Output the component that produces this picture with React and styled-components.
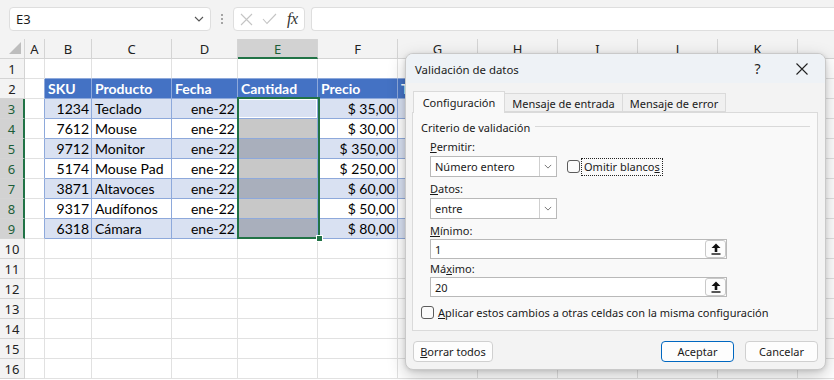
import React from 'react';
import styled, { createGlobalStyle } from 'styled-components';

const GlobalStyle = createGlobalStyle`
  html, body { margin: 0; padding: 0; background: #ffffff; }
  body { width: 834px; height: 380px; overflow: hidden; font-family: "Noto Sans", sans-serif; }
  * { box-sizing: border-box; }
`;

const Page = styled.div`
  position: relative;
  width: 834px;
  height: 380px;
  overflow: hidden;
  background: #ffffff;
`;

/* ---------- formula bar ---------- */
const TopBar = styled.div`
  display: flex;
  align-items: flex-start;
  height: 39px;
  padding: 7px 0 0 9px;
  background: #f3f3f3;
`;

const NameBox = styled.div`
  display: flex;
  align-items: center;
  justify-content: space-between;
  width: 202px;
  height: 24px;
  padding: 0 6px 0 6px;
  background: #ffffff;
  border: 1px solid #dedede;
  border-radius: 4px;
  font: 13px "Noto Sans", sans-serif;
  color: #1b1b1b;
`;

const Grip = styled.div`
  display: flex;
  flex-direction: column;
  align-items: center;
  justify-content: center;
  gap: 2px;
  width: 22px;
  height: 24px;
  span { width: 2px; height: 2px; background: #8a8a8a; border-radius: 1px; }
`;

const FxBox = styled.div`
  display: flex;
  align-items: center;
  gap: 9px;
  width: 72px;
  height: 24px;
  padding: 0 0 0 6px;
  background: #ffffff;
  border: 1px solid #dedede;
  border-radius: 4px;
`;

const FxText = styled.span`
  font: italic 16px "Liberation Serif", serif;
  color: #333;
  letter-spacing: -0.5px;
  margin-left: 1px;
`;

const FormulaInput = styled.div`
  flex: 1;
  height: 24px;
  margin-left: 6px;
  background: #ffffff;
  border: 1px solid #dedede;
  border-right: none;
  border-radius: 4px 0 0 4px;
`;

/* ---------- sheet ---------- */
const SheetWrap = styled.div`
  position: relative;
`;

const SheetGrid = styled.div`
  display: grid;
  grid-template-columns: 25px 20px 47px 80px 66px 80px 80px 80px 80px 80px 80px 80px 80px;
  grid-auto-rows: 20px;
`;

const ColHead = styled.div`
  display: flex;
  align-items: center;
  justify-content: center;
  background: ${p => (p.$sel ? '#d2d2d2' : '#f3f3f3')};
  border-right: 1px solid #d4d4d4;
  border-bottom: ${p => (p.$sel ? '2px solid #217346' : '1px solid #d4d4d4')};
  font: 13px "Noto Sans", sans-serif;
  color: ${p => (p.$sel ? '#1b5e38' : '#222')};
  padding-top: ${p => (p.$sel ? '1px' : '0')};
`;

const Corner = styled.div`
  position: relative;
  background: #f3f3f3;
  border-right: 1px solid #d4d4d4;
  border-bottom: 1px solid #d4d4d4;
  svg { position: absolute; right: 3px; bottom: 4px; }
`;

const RowHead = styled.div`
  display: flex;
  align-items: center;
  justify-content: center;
  background: ${p => (p.$sel ? '#d2d2d2' : '#f3f3f3')};
  border-right: ${p => (p.$sel ? '2px solid #217346' : '1px solid #d4d4d4')};
  border-bottom: 1px solid #d4d4d4;
  font: 13px "Noto Sans", sans-serif;
  color: ${p => (p.$sel ? '#1b5e38' : '#222')};
`;

const Cell = styled.div`
  display: flex;
  align-items: center;
  justify-content: ${p => (p.$align === 'right' ? 'flex-end' : 'flex-start')};
  padding: 0 2px 0 3px;
  background: ${p => p.$bg};
  border-right: 1px solid ${p => p.$br};
  border-bottom: 1px solid ${p => p.$bb};
  box-shadow: ${p => (p.$active ? 'inset 0 0 0 1px #ffffff' : 'none')};
  font: ${p => (p.$bold ? 'bold' : 'normal')} 14px Lato, "Liberation Sans", sans-serif;
  color: ${p => (p.$bold ? '#ffffff' : '#000000')};
  white-space: nowrap;
  overflow: hidden;
`;

const Selection = styled.div`
  position: absolute;
  left: 237px;
  top: 58px;
  width: 83px;
  height: 142px;
  border: 2px solid #217346;
  pointer-events: none;
`;

const Handle = styled.div`
  position: absolute;
  right: -5px;
  bottom: -5px;
  width: 7px;
  height: 7px;
  background: #217346;
  border: 1px solid #ffffff;
`;

/* ---------- dialog ---------- */
const Dialog = styled.div`
  position: absolute;
  left: 405px;
  top: 53px;
  width: 421px;
  height: 317px;
  display: flex;
  flex-direction: column;
  background: #f3f3f3;
  border: 1px solid #c9c9c9;
  border-radius: 8px;
  overflow: hidden;
  box-shadow: 0 6px 18px rgba(0, 0, 0, 0.22), 0 1px 4px rgba(0, 0, 0, 0.12);
  font: 11px "Noto Sans", sans-serif;
  color: #1a1a1a;
`;

const TitleBar = styled.div`
  display: flex;
  align-items: center;
  height: 29px;
  padding: 0 0 0 9px;
  background: #eef2f6;
  font-size: 11.4px;
`;

const Title = styled.div`
  flex: 1;
  padding-top: 1px;
`;

const TitleBtn = styled.div`
  display: flex;
  align-items: center;
  justify-content: center;
  width: 46px;
  height: 29px;
  font-size: 14px;
  color: #222;
  padding-left: ${p => p.$pl || 0}px;
`;

const DialogBody = styled.div`
  display: flex;
  flex-direction: column;
  padding: 8px 7px 8px 6px;
`;

const TabStrip = styled.div`
  display: flex;
  align-items: flex-end;
  height: 21px;
  padding-left: 1px;
  position: relative;
  z-index: 1;
`;

const Tab = styled.div`
  display: flex;
  align-items: center;
  justify-content: center;
  width: ${p => p.$w}px;
  height: ${p => (p.$active ? 22 : 19)}px;
  margin-bottom: ${p => (p.$active ? -1 : 0)}px;
  background: ${p => (p.$active ? '#f9f9f9' : '#f0f0f0')};
  border: 1px solid #dadada;
  border-bottom: ${p => (p.$active ? 'none' : '1px solid #dadada')};
  border-left: ${p => (p.$first ? '1px solid #dadada' : 'none')};
  padding-top: ${p => (p.$active ? 0 : 1)}px;
  font-size: 11px;
`;

const Panel = styled.div`
  display: flex;
  flex-direction: column;
  height: 219px;
  padding: 7px 7px 0 8px;
  background: #f9f9f9;
  border: 1px solid #dadada;
`;

const Legend = styled.div`
  display: flex;
  align-items: center;
  height: 14px;
  font-size: 11px;
  &::after {
    content: '';
    flex: 1;
    height: 1px;
    margin-left: 5px;
    margin-top: -1px;
    background: #d9d9d9;
  }
`;

const Fields = styled.div`
  display: flex;
  flex-direction: column;
  padding-left: 9px;
`;

const Label = styled.div`
  height: 14px;
  line-height: 14px;
  margin-top: ${p => p.$mt}px;
  font-size: 11px;
`;

const Row = styled.div`
  display: flex;
  align-items: center;
  gap: 10px;
  margin-top: ${p => p.$mt}px;
`;

const Select = styled.div`
  display: flex;
  align-items: center;
  width: 127px;
  height: 21px;
  background: #ffffff;
  border: 1px solid #b9b9b9;
  font-size: 11px;
`;

const SelectText = styled.div`
  flex: 1;
  padding-left: 4px;
`;

const DropBtn = styled.div`
  display: flex;
  align-items: center;
  justify-content: center;
  width: 17px;
  height: 100%;
  border-left: 1px solid #cfcfcf;
`;

const CheckBox = styled.div`
  width: 13px;
  height: 13px;
  flex: none;
  background: #fbfbfb;
  border: 1px solid #5c5c5c;
  border-radius: 3px;
`;

const CheckLabel = styled.label`
  display: flex;
  align-items: center;
  gap: ${p => p.$gap}px;
  font-size: 11px;
`;

const FocusText = styled.span`
  outline: 1px dotted #222;
  outline-offset: 1px;
  padding: 0 1px;
  line-height: 14px;
`;

const TextInput = styled.div`
  display: flex;
  align-items: center;
  justify-content: space-between;
  width: 297px;
  height: 20px;
  margin-top: ${p => p.$mt}px;
  padding: 0 0 0 4px;
  background: #ffffff;
  border: 1px solid #b9b9b9;
  font-size: 11px;
`;

const RefBtn = styled.div`
  display: flex;
  align-items: center;
  justify-content: center;
  width: 21px;
  height: 18px;
  background: #fdfdfd;
  border: 1px solid #c9c9c9;
  border-radius: 3px;
`;

const ApplyRow = styled.div`
  margin-top: 8px;
`;

const Footer = styled.div`
  display: flex;
  justify-content: space-between;
  margin-top: 10px;
  padding-left: 1px;
`;

const ButtonGroup = styled.div`
  display: flex;
  gap: 11px;
`;

const Button = styled.div`
  display: flex;
  align-items: center;
  justify-content: center;
  width: ${p => p.$w}px;
  height: 21px;
  background: #fdfdfd;
  border: 1px solid ${p => (p.$primary ? '#0067c0' : '#d0d0d0')};
  border-radius: 4px;
  font-size: 11px;
  color: #1a1a1a;
`;

/* ---------- data ---------- */
const cols = ['', 'A', 'B', 'C', 'D', 'E', 'F', 'G', 'H', 'I', 'J', 'K', ''];
const headers = ['SKU', 'Producto', 'Fecha', 'Cantidad', 'Precio', 'Total'];
const data = [
  ['1234', 'Teclado', 'ene-22', '', '$ 35,00'],
  ['7612', 'Mouse', 'ene-22', '', '$ 30,00'],
  ['9712', 'Monitor', 'ene-22', '', '$ 350,00'],
  ['5174', 'Mouse Pad', 'ene-22', '', '$ 250,00'],
  ['3871', 'Altavoces', 'ene-22', '', '$ 60,00'],
  ['9317', 'Audífonos', 'ene-22', '', '$ 50,00'],
  ['6318', 'Cámara', 'ene-22', '', '$ 80,00'],
];

const BLUE = '#8ea9db';
const GRID = '#e1e1e1';

function cellProps(r, c) {
  const inTableCols = c >= 2 && c <= 7;
  const inTableRows = r >= 2 && r <= 9;
  let bg = '#ffffff';
  let text = '';
  let align = 'left';
  let bold = false;
  let active = false;
  if (inTableCols && inTableRows) {
    if (r === 2) {
      bg = '#4472c4';
      text = headers[c - 2];
      bold = true;
    } else {
      const odd = r % 2 === 1;
      bg = odd ? '#d9e1f2' : '#ffffff';
      const row = data[r - 3];
      if (c <= 6) text = row[c - 2];
      if (c === 2 || c === 4 || c === 6) align = 'right';
      if (c === 5) {
        if (r === 3) active = true;
        else bg = odd ? '#a9afbc' : '#c8c8c8';
      }
    }
  }
  const br = inTableRows && c >= 1 && c <= 7 ? BLUE : GRID;
  const bb = inTableCols && r >= 1 && r <= 9 ? BLUE : GRID;
  return { bg, text, align, bold, active, br, bb };
}

const Chevron = ({ w = 9, color = '#444' }) => (
  <svg width={w} height={w / 2 + 1} viewBox="0 0 10 6">
    <path d="M1 1 L5 5 L9 1" fill="none" stroke={color} strokeWidth="1.1" />
  </svg>
);

const RefIcon = () => (
  <svg width="10" height="12" viewBox="0 0 10 12">
    <path d="M5 0.5 L9.5 5 L6.3 5 L6.3 9 L3.7 9 L3.7 5 L0.5 5 Z" fill="#111" />
    <rect x="0.5" y="10.3" width="9" height="1.4" fill="#111" />
  </svg>
);

export default function App() {
  const rows = [];
  for (let r = 1; r <= 16; r++) rows.push(r);

  return (
    <Page>
      <GlobalStyle />
      <TopBar>
        <NameBox>
          <span>E3</span>
          <Chevron w={10} color="#555" />
        </NameBox>
        <Grip>
          <span />
          <span />
          <span />
        </Grip>
        <FxBox>
          <svg width="13" height="13" viewBox="0 0 13 13">
            <path d="M1 1 L12 12 M12 1 L1 12" stroke="#c4c4c4" strokeWidth="1.1" fill="none" />
          </svg>
          <svg width="15" height="12" viewBox="0 0 15 12">
            <path d="M1 6 L5 10.5 L14 1" stroke="#c4c4c4" strokeWidth="1.1" fill="none" />
          </svg>
          <FxText>fx</FxText>
        </FxBox>
        <FormulaInput />
      </TopBar>

      <SheetWrap>
        <SheetGrid>
          {cols.map((l, i) =>
            i === 0 ? (
              <Corner key="corner">
                <svg width="12" height="12" viewBox="0 0 12 12">
                  <path d="M12 0 L12 12 L0 12 Z" fill="#bdbdbd" />
                </svg>
              </Corner>
            ) : (
              <ColHead key={i} $sel={l === 'E'}>{l}</ColHead>
            )
          )}
          {rows.map(r => (
            <React.Fragment key={r}>
              <RowHead $sel={r >= 3 && r <= 9}>{r}</RowHead>
              {cols.slice(1).map((_, ci) => {
                const c = ci + 1;
                const p = cellProps(r, c);
                return (
                  <Cell
                    key={c}
                    $bg={p.bg}
                    $br={p.br}
                    $bb={p.bb}
                    $align={p.align}
                    $bold={p.bold}
                    $active={p.active}
                  >
                    {p.text}
                  </Cell>
                );
              })}
            </React.Fragment>
          ))}
        </SheetGrid>
        <Selection>
          <Handle />
        </Selection>
      </SheetWrap>

      <Dialog>
        <TitleBar>
          <Title>Validación de datos</Title>
          <TitleBtn $pl={3}>?</TitleBtn>
          <TitleBtn>
            <svg width="12" height="12" viewBox="0 0 12 12">
              <path d="M0.5 0.5 L11.5 11.5 M11.5 0.5 L0.5 11.5" stroke="#222" strokeWidth="1.1" />
            </svg>
          </TitleBtn>
        </TitleBar>
        <DialogBody>
          <TabStrip>
            <Tab $active $first $w={92}>Configuración</Tab>
            <Tab $w={118}>Mensaje de entrada</Tab>
            <Tab $w={103}>Mensaje de error</Tab>
          </TabStrip>
          <Panel>
            <Legend>Criterio de validación</Legend>
            <Fields>
              <Label $mt={6}>
                <u>P</u>ermitir:
              </Label>
              <Row $mt={2}>
                <Select>
                  <SelectText>Número entero</SelectText>
                  <DropBtn>
                    <Chevron w={8} color="#666" />
                  </DropBtn>
                </Select>
                <CheckLabel $gap={3}>
                  <CheckBox />
                  <FocusText>
                    Omitir blanco<u>s</u>
                  </FocusText>
                </CheckLabel>
              </Row>
              <Label $mt={5}>
                <u>D</u>atos:
              </Label>
              <Row $mt={2}>
                <Select>
                  <SelectText>entre</SelectText>
                  <DropBtn>
                    <Chevron w={8} color="#666" />
                  </DropBtn>
                </Select>
              </Row>
              <Label $mt={5}>
                <u>M</u>ínimo:
              </Label>
              <TextInput $mt={1}>
                <span>1</span>
                <RefBtn>
                  <RefIcon />
                </RefBtn>
              </TextInput>
              <Label $mt={3}>
                Má<u>x</u>imo:
              </Label>
              <TextInput $mt={1}>
                <span>20</span>
                <RefBtn>
                  <RefIcon />
                </RefBtn>
              </TextInput>
            </Fields>
            <ApplyRow>
              <CheckLabel $gap={4}>
                <CheckBox />
                <span>
                  <u>A</u>plicar estos cambios a otras celdas con la misma configuración
                </span>
              </CheckLabel>
            </ApplyRow>
          </Panel>
          <Footer>
            <Button $w={80}>
              <span>
                <u>B</u>orrar todos
              </span>
            </Button>
            <ButtonGroup>
              <Button $w={73} $primary>Aceptar</Button>
              <Button $w={73}>Cancelar</Button>
            </ButtonGroup>
          </Footer>
        </DialogBody>
      </Dialog>
    </Page>
  );
}
